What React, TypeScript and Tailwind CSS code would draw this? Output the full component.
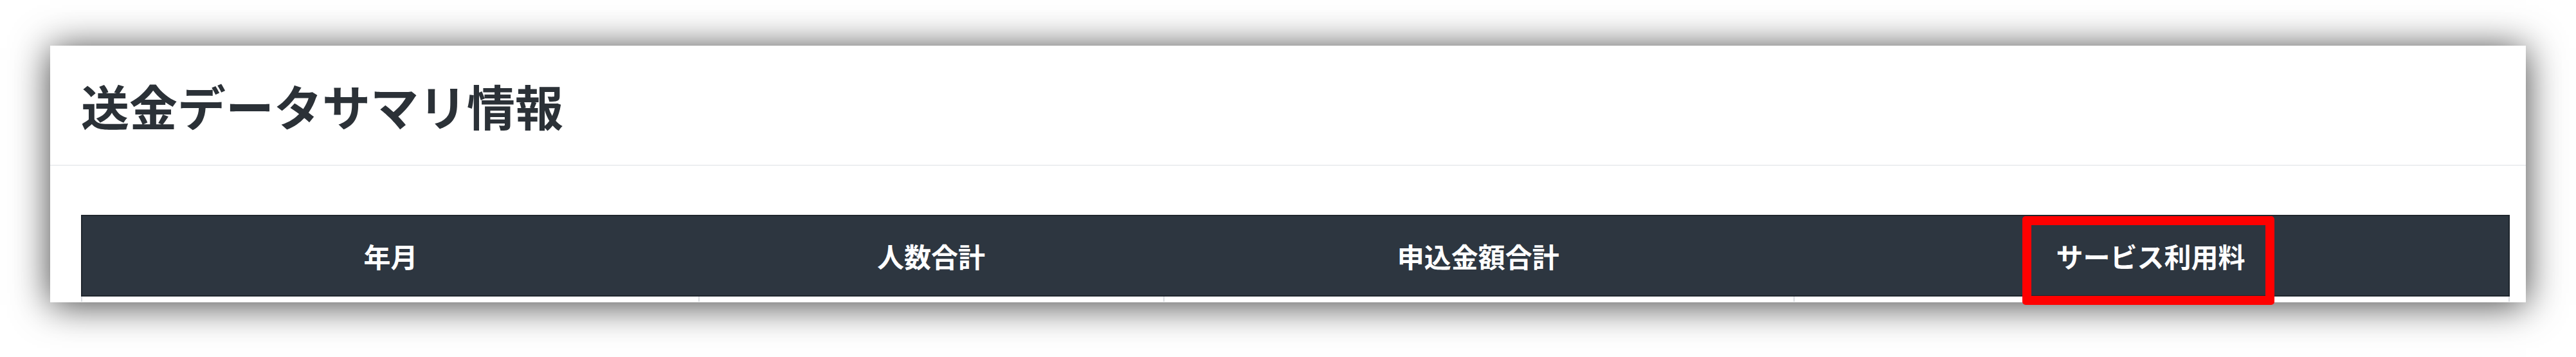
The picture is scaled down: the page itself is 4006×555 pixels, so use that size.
import React from "react";

const cols = [
  { label: "年月", w: "w-[960px]" },
  { label: "人数合計", w: "w-[723px]" },
  { label: "申込金額合計", w: "w-[980px]" },
  { label: "サービス利用料", w: "w-[1114px]", highlight: true },
];

export default function App() {
  return (
    <div
      className="w-[4006px] h-[555px] bg-white pl-[78px] pt-[71px] overflow-hidden"
      style={{ fontFamily: '"Noto Sans CJK JP", "Noto Sans", sans-serif' }}
    >
      <div className="w-[3850px] h-[399px] bg-white shadow-[0_4px_55px_rgba(0,0,0,0.75)] flex flex-col">
        <div className="h-[187px] shrink-0 flex items-center pl-[48px] border-b-2 border-[#eceef1]">
          <h1 className="text-[75px] font-bold leading-none text-[#2b3137] tracking-[0px]">
            送金データサマリ情報
          </h1>
        </div>
        <div className="pt-[76px] pl-[48px] pr-[25px] flex-1">
          <div className="flex flex-col">
            <div className="flex h-[127px] bg-[#2d3640] border-2 border-[#1f262d]">
              {cols.map((c) => (
                <div
                  key={c.label}
                  className={`${c.w} relative flex items-center justify-center`}
                >
                  <span className="text-[42px] font-bold text-white leading-none">
                    {c.label}
                  </span>
                  {c.highlight && (
                    <div className="absolute left-[357px] top-0 w-[392px] h-[138px] border-[14px] border-[#ff0000] rounded-[5px]" />
                  )}
                </div>
              ))}
            </div>
            <div className="flex h-[8px]">
              {cols.map((c, i) => (
                <div
                  key={c.label}
                  className={`${c.w} h-full border-l-2 border-[#dcdfe3] ${i === cols.length - 1 ? "border-r-2" : ""}`}
                />
              ))}
            </div>
          </div>
        </div>
      </div>
    </div>
  );
}
